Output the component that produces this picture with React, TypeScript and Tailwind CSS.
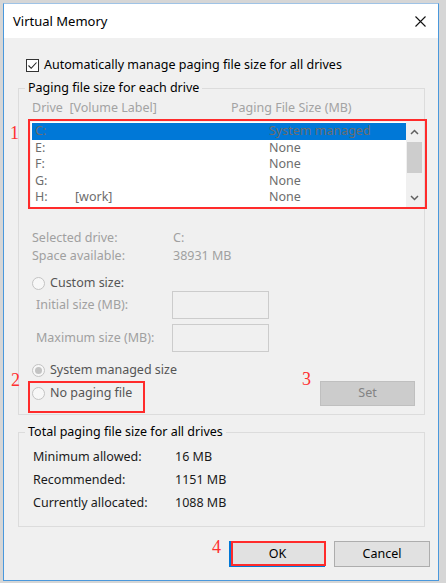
import React from "react";

const FONT = { fontFamily: '"Noto Sans", "Open Sans", sans-serif' };
const SERIF = { fontFamily: '"Liberation Serif", serif' };

function Radio({ checked }: { checked?: boolean }) {
  return (
    <span className="w-[13px] h-[13px] rounded-full border border-[#c3c3c3] bg-[#f7f7f7] flex items-center justify-center shrink-0">
      {checked && <span className="w-[7px] h-[7px] rounded-full bg-[#c3c3c3]" />}
    </span>
  );
}

function Chevron({ up }: { up?: boolean }) {
  return (
    <svg width="9" height="6" viewBox="0 0 9 6">
      <path
        d={up ? "M1 5 L4.5 1.5 L8 5" : "M1 1 L4.5 4.5 L8 1"}
        fill="none"
        stroke="#606060"
        strokeWidth="1.5"
      />
    </svg>
  );
}

export default function App() {
  const drives = [
    { d: "C:", label: "", size: "System managed", sel: true },
    { d: "E:", label: "", size: "None" },
    { d: "F:", label: "", size: "None" },
    { d: "G:", label: "", size: "None" },
    { d: "H:", label: "[work]", size: "None" },
  ];
  return (
    <div className="w-[446px] h-[583px] bg-[#d6d6d6] pt-[3px] pl-[3px] text-[12.5px]" style={FONT}>
      <div className="w-[436px] h-[578px] border border-[#4a98dc] border-t-[#9fc3e6] flex flex-col bg-white">
        {/* Title bar */}
        <div className="h-[34px] bg-white flex items-center justify-between pl-[9px] pr-[12px] shrink-0">
          <span className="text-black text-[13px] pt-[1px]">Virtual Memory</span>
          <svg width="11" height="11" viewBox="0 0 11 11" className="mt-[1px]">
            <path d="M0.5 0.5 L10.5 10.5 M10.5 0.5 L0.5 10.5" stroke="#111" strokeWidth="1.1" />
          </svg>
        </div>
        {/* Body */}
        <div className="flex-1 bg-[#f0f0f0] relative flex flex-col">
          {/* checkbox row */}
          <div className="mt-[21px] ml-[22px] h-[13px] flex items-center gap-[5px]">
            <span className="w-[13px] h-[13px] border border-[#333] bg-white flex items-center justify-center">
              <svg width="11" height="11" viewBox="0 0 11 11">
                <path d="M1.5 5.5 L4.2 8.3 L9.5 2.5" fill="none" stroke="#222" strokeWidth="1.1" />
              </svg>
            </span>
            <span className="text-black leading-none">Automatically manage paging file size for all drives</span>
          </div>

          {/* Group 1 */}
          <div className="mt-[16px] ml-[14px] w-[407px] h-[327px] border border-[#dcdcdc] relative flex flex-col">
            <span className="absolute left-[6px] top-[-9px] px-[3px] bg-[#f0f0f0] text-black leading-[16px]">
              Paging file size for each drive
            </span>
            <div className="mt-[11px] h-[16px] flex items-center text-[#a3a3a3] leading-none">
              <span className="ml-[13px] w-[199px]">Drive&nbsp;&nbsp;[Volume Label]</span>
              <span>Paging File Size (MB)</span>
            </div>
            {/* listbox */}
            <div className="mt-[6px] ml-[12px] w-[392px] h-[85px] relative bg-white flex">
              <div className="flex-1 pt-[1px] pl-[1px] flex flex-col">
                {drives.map((r) => (
                  <div
                    key={r.d}
                    className={`h-[16.6px] flex items-center text-[#6d6d6d] leading-none ${
                      r.sel ? "bg-[#0078d7]" : ""
                    }`}
                  >
                    <span className="ml-[3px] w-[40px]">{r.d}</span>
                    <span className="w-[194px]">{r.label}</span>
                    <span>{r.size}</span>
                  </div>
                ))}
              </div>
              <div className="w-[17px] bg-[#f0f0f0] flex flex-col items-center">
                <div className="h-[20px] flex items-center justify-center">
                  <Chevron up />
                </div>
                <div className="w-[15px] h-[31px] bg-[#cdcdcd]" />
                <div className="flex-1" />
                <div className="h-[18px] flex items-center justify-center">
                  <Chevron />
                </div>
              </div>
              <div className="absolute left-[-3px] top-[-3px] w-[399px] h-[90px] border-2 border-[#ff2b2b]" />
            </div>

            <div className="mt-[23px] h-[16px] flex items-center text-[#a0a0a0] leading-none">
              <span className="ml-[13px] w-[141px]">Selected drive:</span>
              <span>C:</span>
            </div>
            <div className="mt-[2px] h-[16px] flex items-center text-[#a0a0a0] leading-none">
              <span className="ml-[13px] w-[141px]">Space available:</span>
              <span>38931 MB</span>
            </div>

            <div className="mt-[11px] h-[16px] ml-[13px] flex items-center gap-[5px] leading-none text-[#555]">
              <Radio />
              <span>Custom size:</span>
            </div>
            <div className="h-[28px] flex items-center leading-none text-[#a0a0a0]">
              <span className="ml-[17px] w-[136px]">Initial size (MB):</span>
              <div className="w-[97px] h-[28px] border border-[#cccccc] bg-[#f0f0f0]" />
            </div>
            <div className="mt-[5px] h-[28px] flex items-center leading-none text-[#a0a0a0]">
              <span className="ml-[17px] w-[136px]">Maximum size (MB):</span>
              <div className="w-[97px] h-[28px] border border-[#cccccc] bg-[#f0f0f0]" />
            </div>
            <div className="mt-[10px] h-[16px] ml-[13px] flex items-center gap-[5px] leading-none text-[#555]">
              <Radio checked />
              <span>System managed size</span>
            </div>
            <div className="mt-[3px] h-[25px] flex items-center">
              <div className="ml-[13px] flex items-center gap-[5px] leading-none text-[#555] relative">
                <Radio />
                <span>No paging file</span>
                <div className="absolute left-[-4px] top-[-6px] w-[117px] h-[32px] border-2 border-[#ff2b2b]" />
              </div>
              <div className="ml-auto mr-[9px] w-[95px] h-[25px] bg-[#cccccc] border border-[#bfbfbf] flex items-center justify-center text-[#838383] leading-none">
                Set
              </div>
            </div>
          </div>

          {/* Group 2 */}
          <div className="mt-[17px] ml-[14px] w-[407px] h-[95px] border border-[#dcdcdc] relative flex flex-col gap-[5px] pt-[15px]">
            <span className="absolute left-[6px] top-[-9px] px-[3px] bg-[#f0f0f0] text-black leading-[16px]">
              Total paging file size for all drives
            </span>
            {[
              ["Minimum allowed:", "16 MB"],
              ["Recommended:", "1151 MB"],
              ["Currently allocated:", "1088 MB"],
            ].map(([a, b]) => (
              <div key={a} className="h-[18px] flex items-center text-[#1a1a1a] leading-none">
                <span className="ml-[14px] w-[142px]">{a}</span>
                <span>{b}</span>
              </div>
            ))}
          </div>

          {/* Buttons */}
          <div className="mt-[14px] flex justify-end pr-[8px] gap-[9px]">
            <div className="relative w-[96px] h-[26px] bg-[#e1e1e1] border border-[#0078d7] border-l-2 flex items-center justify-center text-black leading-none">
              OK
              <div className="absolute left-[0px] top-[-1px] right-[-2px] bottom-[0px] border-2 border-[#ff2b2b]" />
            </div>
            <div className="w-[96px] h-[26px] bg-[#e1e1e1] border border-[#adadad] flex items-center justify-center text-black leading-none">
              Cancel
            </div>
          </div>

          {/* Annotations */}
          <span className="absolute left-[6px] top-[86px] text-[#ff3030] text-[18px] leading-none" style={SERIF}>1</span>
          <span className="absolute left-[7px] top-[333px] text-[#ff3030] text-[18px] leading-none" style={SERIF}>2</span>
          <span className="absolute left-[298px] top-[332px] text-[#ff3030] text-[18px] leading-none" style={SERIF}>3</span>
          <span className="absolute left-[208px] top-[500px] text-[#ff3030] text-[18px] leading-none" style={SERIF}>4</span>
        </div>
      </div>
    </div>
  );
}
